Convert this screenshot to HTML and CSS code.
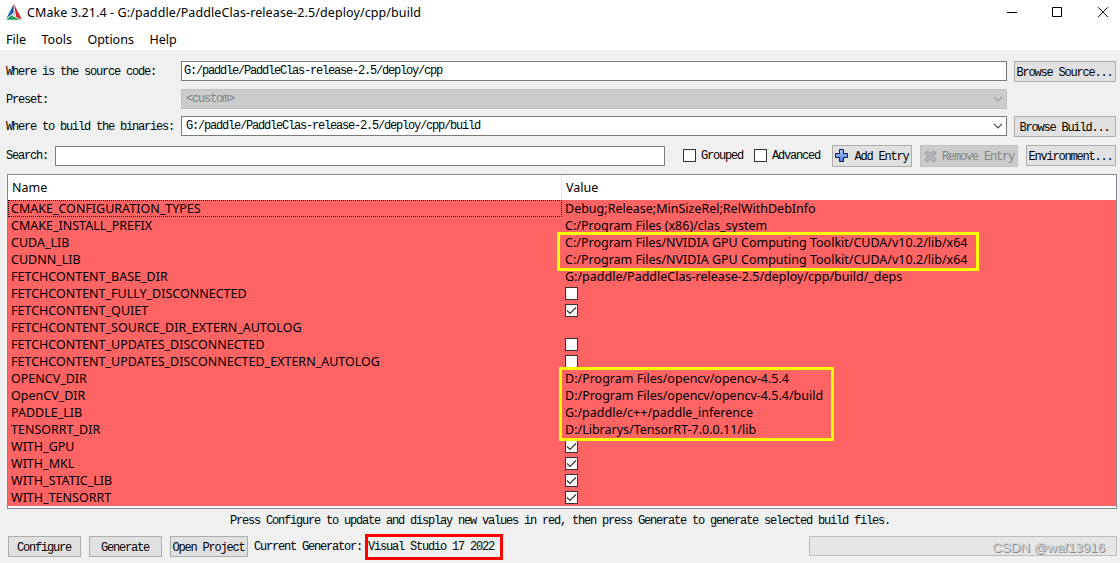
FILE: index.html
```
<!DOCTYPE html>
<html lang="en">
<head>
    <meta charset="UTF-8">
    <meta name="viewport" content="width=device-width, initial-scale=1.0">
    <title>CMake 3.21.4 - G:/paddle/PaddleClas-release-2.5/deploy/cpp/build</title>
    <link rel="stylesheet" href="styles.css">
</head>
<body>
    <div class="title-bar">
        <svg class="logo" width="16" height="16" viewBox="0 0 16 16">
            <path fill="#d5dade" d="M7.8 2L4.6 11.4L10 13Z"/>
            <path fill="#1f5a9e" d="M7.7 0L0.4 14.6L7.6 8.6Z"/>
            <path fill="#d3232c" d="M8 0L15.8 15.4L10.2 13Z"/>
            <path fill="#259c55" d="M0.2 15.8L5 11.6L14.8 15.8Z"/>
        </svg>
        <span class="title">CMake 3.21.4 - G:/paddle/PaddleClas-release-2.5/deploy/cpp/build</span>
        <svg class="window-buttons" width="102" height="11" viewBox="0 0 102 11" fill="none" stroke="#000">
            <path d="M0 5.5H10"/>
            <path d="M45.5 0.5H54.5V9.5H45.5Z"/>
            <path d="M91 0.2L101 10.2M101 0.2L91 10.2"/>
        </svg>
    </div>
    <div class="menu">
        <span>File</span>
        <span>Tools</span>
        <span>Options</span>
        <span>Help</span>
    </div>

    <div class="paths">
        <label>Where is the source code:</label>
        <div class="field">G:/paddle/PaddleClas-release-2.5/deploy/cpp</div>
        <div class="button">Browse Source...</div>

        <label>Preset:</label>
        <div class="field combo disabled">&lt;custom&gt;
            <svg width="10" height="6" viewBox="0 0 10 6"><path d="M1 0.8L5 4.8L9 0.8"/></svg>
        </div>
        <span></span>

        <label>Where to build the binaries:</label>
        <div class="field combo">G:/paddle/PaddleClas-release-2.5/deploy/cpp/build
            <svg width="10" height="6" viewBox="0 0 10 6"><path d="M1 0.8L5 4.8L9 0.8"/></svg>
        </div>
        <div class="button">Browse Build...</div>
    </div>

    <div class="search-row">
        <label>Search:</label>
        <div class="field search"></div>
        <span class="check"></span><label class="grouped">Grouped</label>
        <span class="check"></span><label class="advanced">Advanced</label>
        <div class="button add">
            <svg width="14" height="14" viewBox="0 0 14 14">
                <defs>
                    <linearGradient id="plus" x1="0" y1="0" x2="0" y2="1">
                        <stop offset="0" stop-color="#a9ccf8"/>
                        <stop offset="1" stop-color="#4f7bd8"/>
                    </linearGradient>
                </defs>
                <path fill="url(#plus)" stroke="#0a1a5c" d="M4.5 0.5H8.5V4.5H12.5V8.5H8.5V12.5H4.5V8.5H0.5V4.5H4.5Z"/>
            </svg>
            Add Entry
        </div>
        <div class="button remove disabled">
            <svg width="13" height="13" viewBox="0 0 13 13">
                <path fill="#b4b4b4" stroke="#9f9f9f" stroke-linejoin="round" d="M3.2 0.7L6.5 3.6L9.8 0.7L12.3 3.2L9.3 6.5L12.3 9.8L9.8 12.3L6.5 9.4L3.2 12.3L0.7 9.8L3.7 6.5L0.7 3.2Z"/>
            </svg>
            Remove Entry
        </div>
        <div class="button environment">Environment...</div>
    </div>

    <div class="cache">
        <div class="row head"><span>Name</span><span>Value</span></div>
        <div class="row selected"><span>CMAKE_CONFIGURATION_TYPES</span><span>Debug;Release;MinSizeRel;RelWithDebInfo</span></div>
        <div class="row"><span>CMAKE_INSTALL_PREFIX</span><span>C:/Program Files (x86)/clas_system</span></div>
        <div class="row"><span>CUDA_LIB</span><span>C:/Program Files/NVIDIA GPU Computing Toolkit/CUDA/v10.2/lib/x64</span></div>
        <div class="row"><span>CUDNN_LIB</span><span>C:/Program Files/NVIDIA GPU Computing Toolkit/CUDA/v10.2/lib/x64</span></div>
        <div class="row"><span>FETCHCONTENT_BASE_DIR</span><span>G:/paddle/PaddleClas-release-2.5/deploy/cpp/build/_deps</span></div>
        <div class="row"><span>FETCHCONTENT_FULLY_DISCONNECTED</span><span><i class="check"></i></span></div>
        <div class="row"><span>FETCHCONTENT_QUIET</span><span><i class="check"><svg viewBox="0 0 11 11"><path d="M1 5.5L4 8.5L10 2.5"/></svg></i></span></div>
        <div class="row"><span>FETCHCONTENT_SOURCE_DIR_EXTERN_AUTOLOG</span><span></span></div>
        <div class="row"><span>FETCHCONTENT_UPDATES_DISCONNECTED</span><span><i class="check"></i></span></div>
        <div class="row"><span>FETCHCONTENT_UPDATES_DISCONNECTED_EXTERN_AUTOLOG</span><span><i class="check"></i></span></div>
        <div class="row"><span>OPENCV_DIR</span><span>D:/Program Files/opencv/opencv-4.5.4</span></div>
        <div class="row"><span>OpenCV_DIR</span><span>D:/Program Files/opencv/opencv-4.5.4/build</span></div>
        <div class="row"><span>PADDLE_LIB</span><span>G:/paddle/c++/paddle_inference</span></div>
        <div class="row"><span>TENSORRT_DIR</span><span>D:/Librarys/TensorRT-7.0.0.11/lib</span></div>
        <div class="row"><span>WITH_GPU</span><span><i class="check"><svg viewBox="0 0 11 11"><path d="M1 5.5L4 8.5L10 2.5"/></svg></i></span></div>
        <div class="row"><span>WITH_MKL</span><span><i class="check"><svg viewBox="0 0 11 11"><path d="M1 5.5L4 8.5L10 2.5"/></svg></i></span></div>
        <div class="row"><span>WITH_STATIC_LIB</span><span><i class="check"><svg viewBox="0 0 11 11"><path d="M1 5.5L4 8.5L10 2.5"/></svg></i></span></div>
        <div class="row"><span>WITH_TENSORRT</span><span><i class="check"><svg viewBox="0 0 11 11"><path d="M1 5.5L4 8.5L10 2.5"/></svg></i></span></div>
        <div class="mark mark-cuda"></div>
        <div class="mark mark-libs"></div>
    </div>

    <p class="hint">Press Configure to update and display new values in red, then press Generate to generate selected build files.</p>

    <div class="bottom">
        <div class="button">Configure</div>
        <div class="button">Generate</div>
        <div class="button open">Open Project</div>
        <span class="generator">Current Generator: <span class="name">Visual Studio 17 2022<span class="mark mark-generator"></span></span></span>
        <div class="progress"><span class="watermark">CSDN @waf13916</span></div>
    </div>
</body>
</html>
```
FILE: styles.css
```
* {
    box-sizing: border-box;
}

body {
    margin: 0;
    height: 563px;
    overflow: hidden;
    background-color: #f0f0f0;
    color: #000;
    font: 12px/18px "Liberation Mono", monospace;
    letter-spacing: -1.2px;
    white-space: nowrap;
}

/* title and menu */
.title-bar,
.menu,
.cache {
    font-family: "Noto Sans", "Open Sans", sans-serif;
    font-size: 12.5px;
    letter-spacing: 0;
}

.title-bar {
    display: flex;
    align-items: center;
    height: 25px;
    padding: 0 11px 0 6px;
    background-color: #fff;
}

.logo {
    margin-top: -1px;
}

.title {
    flex: 1;
    margin-left: 5px;
    letter-spacing: 0.1px;
}

.menu {
    display: flex;
    gap: 15.5px;
    height: 25px;
    padding: 6px 6px 0;
    background-color: #fff;
}

/* inputs and buttons */
.field {
    display: flex;
    align-items: center;
    height: 20px;
    padding: 0 2px;
    border: 1px solid #7a7a7a;
    background-color: #fff;
}

.combo {
    justify-content: space-between;
    padding: 0 3px 0 4px;
}

.combo svg {
    fill: none;
    stroke: #444;
    stroke-width: 1.2;
}

.button {
    display: flex;
    align-items: center;
    justify-content: center;
    height: 21px;
    padding: 2px 1px 0 0;
    border: 1px solid #adadad;
    background-color: #e1e1e1;
}

.disabled {
    border-color: #bfbfbf;
    background-color: #ccc;
    color: #838383;
}

.disabled svg {
    stroke: #9a9a9a;
}

.paths {
    display: grid;
    grid-template-columns: 175px 826px 102px;
    grid-template-rows: 28px 27px 29px;
    padding: 11px 4px 0 6px;
}

.paths label {
    padding-top: 2px;
}

.paths .button {
    margin-left: 7px;
    width: 102px;
}

.check {
    display: block;
    flex: none;
    width: 13px;
    height: 13px;
    border: 1px solid #333;
    background-color: #fff;
}

.check svg {
    display: block;
    fill: none;
    stroke: #333;
    stroke-width: 1.2;
}

.search-row {
    display: flex;
    height: 29px;
    padding: 0 4px 0 6px;
}

.search-row label {
    padding-top: 2px;
    width: 49px;
}

.search-row .search {
    width: 610px;
    margin: 1px 18px 0 0;
}

.search-row .check {
    margin: 4px 5px 0 0;
}

.search-row .grouped {
    width: 53px;
}

.search-row .advanced {
    width: 60px;
}

.add,
.remove {
    height: 22px;
    margin-right: 8px;
}

.add {
    width: 80px;
    gap: 5px;
    padding-right: 0;
}

.remove {
    width: 98px;
    gap: 5px;
    padding-right: 0;
}

.add svg,
.remove svg {
    margin-top: -2px;
}

.environment {
    width: 90px;
}

/* cache table */
.cache {
    position: relative;
    width: 1110px;
    height: 335px;
    margin-left: 7px;
    border: 1px solid #828790;
    background-color: #fff;
}

.row {
    display: grid;
    grid-template-columns: 554px 1fr;
    height: 17px;
    background-color: #ff6464;
    line-height: 17px;
}

.row span {
    padding-left: 3px;
}

.row .check {
    margin-top: 2px;
}

.head {
    height: 25px;
    background-color: #fff;
    line-height: 25px;
}

.head span {
    padding-left: 4px;
}

.head span:first-child {
    border-right: 1px solid #e5e5e5;
}

.selected span:first-child {
    outline: 1px dotted #000;
    outline-offset: -1px;
}

/* highlight frames */
.mark {
    position: absolute;
    border: 3px solid #ff0;
}

.mark-cuda {
    left: 549px;
    top: 57px;
    width: 422px;
    height: 39px;
}

.mark-libs {
    left: 551px;
    top: 192px;
    width: 275px;
    height: 74px;
}

.mark-generator {
    left: -3px;
    top: -6px;
    width: 138px;
    height: 26px;
    border-color: #f00;
}

.hint {
    margin: 3px 0 6px;
    text-align: center;
}

.bottom {
    display: flex;
    padding: 0 3px 0 8px;
}

.bottom .button {
    width: 73px;
    margin-right: 8px;
}

.bottom .open {
    width: 78px;
    margin-right: 6px;
}

.generator {
    flex: 1;
    padding-top: 2px;
}

.generator .name {
    position: relative;
}

.progress {
    width: 308px;
    height: 20px;
    padding: 2px 11px 0 0;
    border: 1px solid #bcbcbc;
    background-color: #e6e6e6;
    text-align: right;
}

.watermark {
    color: #d0d0d0;
    font: 13.5px/18px "Liberation Sans", sans-serif;
    letter-spacing: -0.1px;
    text-shadow: 1px 1px 0 #8a8a8a;
}
```
